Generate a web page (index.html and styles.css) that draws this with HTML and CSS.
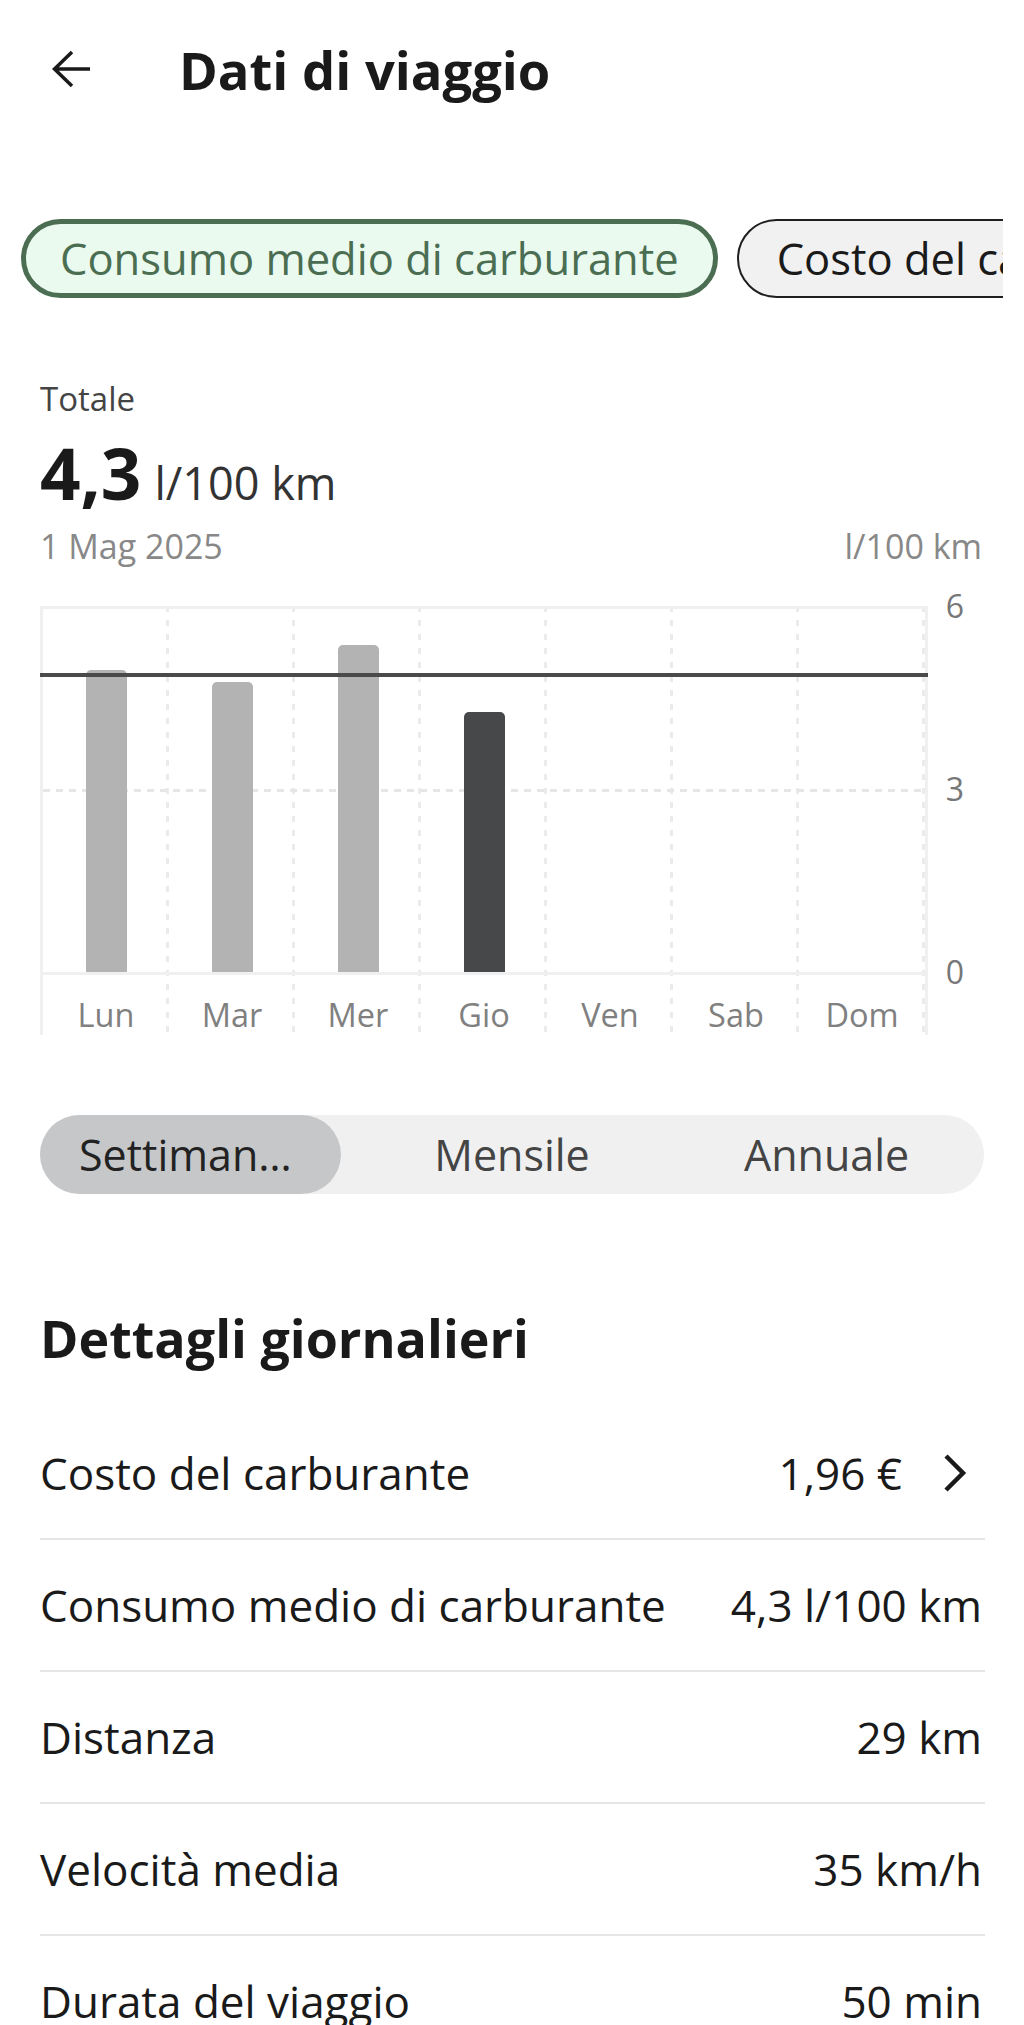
FILE: index.html
```html
<!DOCTYPE html>
<html lang="it">
<head>
    <meta charset="UTF-8">
    <meta name="viewport" content="width=device-width, initial-scale=1.0">
    <title>Dati di viaggio</title>
    <link rel="stylesheet" href="styles.css">
</head>
<body>
    <div class="screen">
        <header class="topbar">
            <button class="back" aria-label="Indietro">
                <svg width="40" height="40" viewBox="0 0 40 40">
                    <path d="M21 2 L3.5 19 L21 36 M3.5 19 H39" fill="none" stroke="#1a1a1a" stroke-width="3.5"/>
                </svg>
            </button>
            <h1 class="title">Dati di viaggio</h1>
        </header>

        <div class="chips">
            <button class="chip active">Consumo medio di carburante</button>
            <button class="chip">Costo del carburante</button>
        </div>

        <section class="summary">
            <div class="summary-label">Totale</div>
            <div class="summary-value">
                <span class="big">4,3</span>
                <span class="unit">l/100 km</span>
            </div>
            <div class="summary-meta">
                <span>1 Mag 2025</span>
                <span>l/100 km</span>
            </div>
        </section>

        <div class="chart">
            <div class="plot">
                <div class="day">
                    <div class="bar-area"><div class="bar" style="height: 83.3%"></div></div>
                    <div class="day-label">Lun</div>
                </div>
                <div class="day">
                    <div class="bar-area"><div class="bar" style="height: 80%"></div></div>
                    <div class="day-label">Mar</div>
                </div>
                <div class="day">
                    <div class="bar-area"><div class="bar" style="height: 90%"></div></div>
                    <div class="day-label">Mer</div>
                </div>
                <div class="day">
                    <div class="bar-area"><div class="bar current" style="height: 71.7%"></div></div>
                    <div class="day-label">Gio</div>
                </div>
                <div class="day">
                    <div class="bar-area"></div>
                    <div class="day-label">Ven</div>
                </div>
                <div class="day">
                    <div class="bar-area"></div>
                    <div class="day-label">Sab</div>
                </div>
                <div class="day">
                    <div class="bar-area"></div>
                    <div class="day-label">Dom</div>
                </div>

                <div class="lines">
                    <div class="grid-line"></div>
                    <div class="avg-line"></div>
                </div>
            </div>
            <div class="axis">
                <span>6</span>
                <span>3</span>
                <span>0</span>
            </div>
        </div>

        <div class="segmented">
            <button class="seg active">Settimanale</button>
            <button class="seg">Mensile</button>
            <button class="seg">Annuale</button>
        </div>

        <h2 class="section-title">Dettagli giornalieri</h2>

        <ul class="details">
            <li class="row">
                <span>Costo del carburante</span>
                <span class="value">1,96 €
                    <svg class="chevron" width="24" height="38" viewBox="0 0 24 38">
                        <path d="M3 2 L20 19 L3 36" fill="none" stroke="#1a1a1a" stroke-width="4.5"/>
                    </svg>
                </span>
            </li>
            <li class="row">
                <span>Consumo medio di carburante</span>
                <span class="value">4,3 l/100 km</span>
            </li>
            <li class="row">
                <span>Distanza</span>
                <span class="value">29 km</span>
            </li>
            <li class="row">
                <span>Velocità media</span>
                <span class="value">35 km/h</span>
            </li>
            <li class="row">
                <span>Durata del viaggio</span>
                <span class="value">50 min</span>
            </li>
        </ul>
    </div>
</body>
</html>
```

FILE: styles.css
```css
body {
    margin: 0;
    background: #fff;
    font-family: 'Open Sans', 'Liberation Sans', sans-serif;
    color: #1a1a1a;
}

button {
    font: inherit;
    color: inherit;
    background: none;
    border: none;
    padding: 0;
    cursor: pointer;
}

.screen {
    height: 100vh;
    overflow: hidden;
}

/* top bar */
.topbar {
    display: flex;
    align-items: center;
    height: 140px;
    padding-left: 51px;
}

.back {
    display: flex;
    width: 40px;
    height: 40px;
}

.title {
    margin: 0 0 0 88px;
    font-size: 52.5px;
    font-weight: 700;
    line-height: 64px;
}

/* chips */
.chips {
    display: flex;
    gap: 19px;
    margin: 79px 21px 0;
    overflow: hidden;
}

.chip {
    flex-shrink: 0;
    box-sizing: border-box;
    height: 79px;
    padding: 0 38px;
    border: 2px solid #1f1f1f;
    border-radius: 40px;
    background: #f1f1f1;
    font-size: 43.5px;
    line-height: 1;
    white-space: nowrap;
}

.chip.active {
    padding: 0 34px;
    border: 5px solid #4b6e53;
    background: #eafaee;
    color: #4b6e53;
}

/* summary */
.summary {
    padding: 0 40px;
    margin-top: 81px;
}

.summary-label {
    font-size: 33px;
    line-height: 40px;
    color: #444;
}

.summary-value {
    display: flex;
    align-items: baseline;
    margin-top: 16px;
    height: 76px;
}

.summary-value .big {
    font-size: 71px;
    font-weight: 700;
    line-height: 76px;
}

.summary-value .unit {
    margin-left: 13px;
    font-size: 45px;
    line-height: 50px;
    color: #333;
}

.summary-meta {
    display: flex;
    justify-content: space-between;
    margin-top: 15px;
    padding-right: 2px;
    font-size: 34px;
    line-height: 40px;
    color: #888;
}

/* chart */
.chart {
    display: flex;
    margin-top: 40px;
    padding-left: 40px;
}

.plot {
    position: relative;
    box-sizing: border-box;
    width: 888px;
    display: grid;
    grid-template-columns: repeat(7, 1fr);
    border-left: 3px solid #f0f0f0;
    border-right: 3px solid #f0f0f0;
}

.day {
    display: flex;
    flex-direction: column;
    background: linear-gradient(#ebebeb 0 6px, transparent 6px) right top / 3px 14px repeat-y;
}

.day:last-child {
    background: none;
}

.bar-area {
    height: 363px;
    display: flex;
    align-items: flex-end;
    justify-content: center;
    border-top: 3px solid #f0f0f0;
    border-bottom: 3px solid #f0f0f0;
}

.bar {
    position: relative;
    z-index: 1;
    width: 41px;
    border-radius: 5px 5px 0 0;
    background: #b3b3b3;
}

.bar.current {
    background: #474849;
}

.day-label {
    box-sizing: border-box;
    height: 60px;
    padding-top: 20px;
    font-size: 32.5px;
    line-height: 40px;
    text-align: center;
    color: #808080;
}

.lines {
    position: absolute;
    left: -3px;
    right: -3px;
    top: 3px;
    height: 363px;
    pointer-events: none;
}

.grid-line {
    position: absolute;
    left: 3px;
    right: 3px;
    bottom: 50%;
    height: 3px;
    margin-bottom: -1px;
    background: repeating-linear-gradient(to right, #e6e6e6 0 7px, transparent 7px 13px);
}

.avg-line {
    position: absolute;
    z-index: 2;
    left: 0;
    right: 0;
    bottom: 81.7%;
    height: 4px;
    margin-bottom: -2px;
    background: #4a4a4a;
}

.axis {
    display: flex;
    flex-direction: column;
    justify-content: space-between;
    width: 54px;
    height: 406px;
    margin-top: -20px;
    font-size: 32px;
    line-height: 40px;
    text-align: center;
    color: #777;
}

/* period switch */
.segmented {
    display: grid;
    grid-template-columns: repeat(3, 1fr);
    height: 79px;
    margin: 80px 40px 0;
    border-radius: 40px;
    background: #f0f0f0;
}

.seg {
    font-size: 43px;
    color: #444;
    text-align: center;
    white-space: nowrap;
    overflow: hidden;
    text-overflow: ellipsis;
}

.seg.active {
    margin-right: 14px;
    padding: 0 36px 0 39px;
    border-radius: 40px;
    background: #c6c7c9;
    color: #222;
    text-align: left;
}

/* details */
.section-title {
    margin: 112px 40px 0;
    font-size: 52px;
    font-weight: 700;
    line-height: 64px;
}

.details {
    list-style: none;
    margin: 38px 39px 0 40px;
    padding: 0;
}

.row {
    box-sizing: border-box;
    height: 132px;
    display: flex;
    align-items: center;
    justify-content: space-between;
    padding-right: 3px;
    border-bottom: 2px solid #e6e6e6;
    font-size: 44px;
}

.value {
    display: flex;
    align-items: center;
}

.chevron {
    margin: 0 15px 0 41px;
}
```
